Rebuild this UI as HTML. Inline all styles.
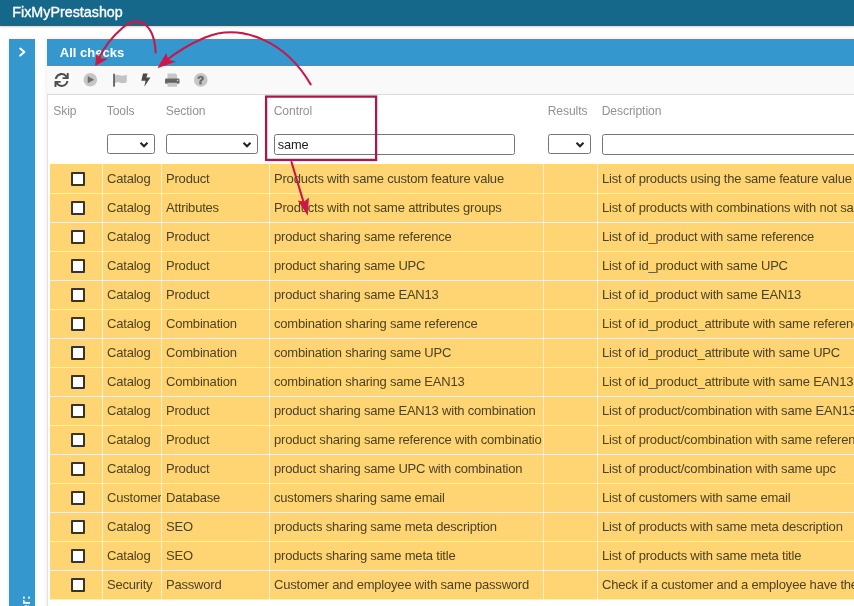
<!DOCTYPE html>
<html lang="en">
<head>
<meta charset="utf-8">
<title>FixMyPrestashop</title>
<style>
*{box-sizing:border-box;margin:0;padding:0}
#topbar,#side,#panel{will-change:transform}
html,body{width:854px;height:606px;overflow:hidden;background:#fff;font-family:"Liberation Sans",Arial,sans-serif;}
body{position:relative}
#topbar{position:absolute;left:0;top:0;width:854px;height:25.5px;background:#16688a;color:#fff;font-size:14.3px;line-height:24px;padding-left:12.3px;-webkit-text-stroke:.35px #fff;box-shadow:0 1px 2px rgba(0,0,0,.18)}
#side{position:absolute;left:9px;top:39px;width:26px;height:580px;background:#3498cf;box-shadow:0 0 3px rgba(0,0,0,.12)}
#side svg{position:absolute;left:0;top:0}
#panel{position:absolute;left:47px;top:39px;width:830px;height:580px;background:#fff;box-shadow:0 0 4px rgba(0,0,0,.10)}
#pl{position:absolute;left:0;top:26px;width:1px;height:560px;background:#e3e3e3}
#phead{position:absolute;left:0;top:0;width:100%;height:26.6px;background:#3498cf;color:#fff;font-size:13px;font-weight:bold;line-height:27px;padding-left:12.8px}
#tbar{position:absolute;left:0;top:26.6px;width:100%;height:29.4px;background:#f9f9f9;border-bottom:1px solid #dcdcdc}
#tbar svg{position:absolute}
#q{position:absolute;left:146.800px;top:7.100px;width:14px;height:14px;text-align:center;font-weight:bold;font-size:11.500px;line-height:14px;color:#6a6a6a;-webkit-text-stroke:.6px #6a6a6a}
#thead{position:absolute;left:0;top:56px;width:100%;height:69px}
#thead .l{position:absolute;top:9.400px;margin-left:.4px;font-size:12.100px;letter-spacing:-.08px;color:#929292;line-height:14px;white-space:nowrap}
.fi{position:absolute;top:39.400px;height:20px;border:1px solid #767676;border-radius:2.500px;background:#fff;font-size:12.800px;letter-spacing:-.1px;color:#222;line-height:20px;padding-left:2.700px}
.fi.t{height:21px}
.fi svg{position:absolute;right:5px;top:5.500px}
table{position:absolute;left:3px;top:125px;border-collapse:separate;border-spacing:0;table-layout:fixed;width:820px}
td{height:29px;background:#ffd573;border-bottom:1px solid #fff0cc;border-right:1px solid #fff0cc;font-size:13px;letter-spacing:-.2px;color:#4d4222;padding:0 0 0 4px;white-space:nowrap;overflow:hidden;vertical-align:top;line-height:26px;padding-top:.5px}
td.c{padding:0}
tr:first-child td{height:30px;padding-top:1.500px}
tr:first-child td.c{padding-top:1px}
td.c{line-height:0}
.cb{display:block;width:14px;height:14px;border:2px solid #3a3327;background:#fff;margin:7px 0 0 21px;border-radius:1px}
#anno{position:absolute;left:0;top:0;width:854px;height:606px;pointer-events:none}
</style>
</head>
<body>
<div id="topbar">FixMyPrestashop</div>

<div id="side">
  <svg width="26" height="567" viewBox="0 0 26 567"><path d="M11.200 9.600 L15.400 13.100 L11.200 16.600" fill="none" stroke="#fff" stroke-width="2" stroke-linecap="round" stroke-linejoin="round"/><text transform="translate(20.800 556.300) rotate(-90)" text-anchor="end" fill="#fff" style="font-family:'Liberation Sans',Arial,sans-serif;font-weight:bold;font-size:13px">Filter:</text></svg>
</div>

<div id="panel">
  <div id="pl"></div>
  <div id="phead">All checks</div>
  <div id="tbar">
    <svg style="left:0;top:0" width="200" height="29" viewBox="47 65.600 200 29">
      <!-- refresh -->
      <g transform="translate(54.500 72.500) scale(0.02773)"><path fill="#4e4e4e" d="M440.650 12.570l4 82.770A247.160 247.160 0 0 0 255.830 8C134.730 8 33.910 94.920 12.290 209.820A12 12 0 0 0 24.090 224h49.050a12 12 0 0 0 11.670-9.260 175.910 175.910 0 0 1 317-56.940l-101.460-4.860a12 12 0 0 0-12.570 12v47.410a12 12 0 0 0 12 12H500a12 12 0 0 0 12-12V12a12 12 0 0 0-12-12h-47.370a12 12 0 0 0-11.980 12.570zM255.830 432a175.610 175.610 0 0 1-146-77.800l101.800 4.870a12 12 0 0 0 12.570-12v-47.400a12 12 0 0 0-12-12H12a12 12 0 0 0-12 12V500a12 12 0 0 0 12 12h47.350a12 12 0 0 0 12-12.600l-4.150-82.570A247.170 247.170 0 0 0 255.830 504c121.110 0 221.930-86.920 243.550-201.820a12 12 0 0 0-11.800-14.180h-49.050a12 12 0 0 0-11.670 9.260A175.860 175.860 0 0 1 255.830 432z"/></g>
      <!-- play circle -->
      <circle cx="90.300" cy="79.300" r="6.800" fill="#c6c6c6"/>
      <path d="M88 76.200 L93.700 79.300 L88 82.400 Z" fill="#6e6e6e" stroke="#6e6e6e" stroke-width=".6" stroke-linejoin="round"/>
      <!-- flag -->
      <path d="M114.800 75 C116.800 74 118.400 74.300 120 74.900 C121.800 75.500 123.600 75.500 126.800 74.400 V81.800 C124 83 122 83 120.200 82.400 C118.500 81.800 116.900 81.700 114.800 82.700 Z" fill="#c4c4c4"/>
      <rect x="113.100" y="73.100" width="1.900" height="13.300" rx=".9" fill="#666"/>
      <!-- bolt -->
      <path d="M143 73.100 H147.700 L146.300 77.200 H150.500 L144.300 86.400 L145.500 80.400 H141.300 Z" fill="#4a4a4a"/>
      <!-- print -->
      <path d="M167.500 73.200 H175.600 L177.100 74.700 V78.500 H167.500 Z" fill="#c6c6c6"/>
      <rect x="165" y="78" width="14.500" height="5.300" rx="1.300" fill="#666"/>
      <rect x="167.500" y="81.800" width="9.600" height="4.500" fill="#c6c6c6"/>
      <rect x="167.500" y="81.300" width="9.600" height=".9" fill="#555"/>
      <circle cx="177.600" cy="80" r=".7" fill="#ddd"/>
      <!-- question -->
      <circle cx="200.800" cy="79.500" r="6.800" fill="#c6c6c6"/>
    </svg>
    <div id="q">?</div>
  </div>

  <div id="thead">
    <div class="l" style="left:5.8px">Skip</div>
    <div class="l" style="left:59.3px">Tools</div>
    <div class="l" style="left:118.3px">Section</div>
    <div class="l" style="left:226.3px">Control</div>
    <div class="l" style="left:500.3px">Results</div>
    <div class="l" style="left:554.3px">Description</div>

    <div class="fi" style="left:60px;width:48px"><svg width="10" height="8" viewBox="0 0 10 8"><path d="M1.500 1.800 L5 5.300 L8.500 1.800" fill="none" stroke="#222" stroke-width="2"/></svg></div>
    <div class="fi" style="left:119px;width:92px"><svg width="10" height="8" viewBox="0 0 10 8"><path d="M1.500 1.800 L5 5.300 L8.500 1.800" fill="none" stroke="#222" stroke-width="2"/></svg></div>
    <div class="fi t" style="left:227px;width:241px">same</div>
    <div class="fi" style="left:501px;width:43px"><svg width="10" height="8" viewBox="0 0 10 8"><path d="M1.500 1.800 L5 5.300 L8.500 1.800" fill="none" stroke="#222" stroke-width="2"/></svg></div>
    <div class="fi t" style="left:555px;width:280px"></div>
  </div>

  <table>
    <colgroup><col style="width:53px"><col style="width:59px"><col style="width:108px"><col style="width:274px"><col style="width:54px"><col style="width:272px"></colgroup>
    <tr><td class="c"><span class="cb"></span></td><td>Catalog</td><td>Product</td><td>Products with same custom feature value</td><td></td><td>List of products using the same feature value</td></tr>
    <tr><td class="c"><span class="cb"></span></td><td>Catalog</td><td>Attributes</td><td>Products with not same attributes groups</td><td></td><td>List of products with combinations with not same attributes groups</td></tr>
    <tr><td class="c"><span class="cb"></span></td><td>Catalog</td><td>Product</td><td>product sharing same reference</td><td></td><td>List of id_product with same reference</td></tr>
    <tr><td class="c"><span class="cb"></span></td><td>Catalog</td><td>Product</td><td>product sharing same UPC</td><td></td><td>List of id_product with same UPC</td></tr>
    <tr><td class="c"><span class="cb"></span></td><td>Catalog</td><td>Product</td><td>product sharing same EAN13</td><td></td><td>List of id_product with same EAN13</td></tr>
    <tr><td class="c"><span class="cb"></span></td><td>Catalog</td><td>Combination</td><td>combination sharing same reference</td><td></td><td>List of id_product_attribute with same reference</td></tr>
    <tr><td class="c"><span class="cb"></span></td><td>Catalog</td><td>Combination</td><td>combination sharing same UPC</td><td></td><td>List of id_product_attribute with same UPC</td></tr>
    <tr><td class="c"><span class="cb"></span></td><td>Catalog</td><td>Combination</td><td>combination sharing same EAN13</td><td></td><td>List of id_product_attribute with same EAN13</td></tr>
    <tr><td class="c"><span class="cb"></span></td><td>Catalog</td><td>Product</td><td>product sharing same EAN13 with combination</td><td></td><td>List of product/combination with same EAN13</td></tr>
    <tr><td class="c"><span class="cb"></span></td><td>Catalog</td><td>Product</td><td><div style="overflow:hidden;margin-right:1.500px">product sharing same reference with combination</div></td><td></td><td>List of product/combination with same reference</td></tr>
    <tr><td class="c"><span class="cb"></span></td><td>Catalog</td><td>Product</td><td>product sharing same UPC with combination</td><td></td><td>List of product/combination with same upc</td></tr>
    <tr><td class="c"><span class="cb"></span></td><td>Customer</td><td>Database</td><td>customers sharing same email</td><td></td><td>List of customers with same email</td></tr>
    <tr><td class="c"><span class="cb"></span></td><td>Catalog</td><td>SEO</td><td>products sharing same meta description</td><td></td><td>List of products with same meta description</td></tr>
    <tr><td class="c"><span class="cb"></span></td><td>Catalog</td><td>SEO</td><td>products sharing same meta title</td><td></td><td>List of products with same meta title</td></tr>
    <tr><td class="c"><span class="cb"></span></td><td>Security</td><td>Password</td><td>Customer and employee with same password</td><td></td><td>Check if a customer and a employee have the same password</td></tr>
  </table>
</div>

<svg id="anno" viewBox="0 0 854 606">
  <rect x="266.100" y="96.600" width="110" height="63.300" fill="none" stroke="#ab174a" stroke-width="2.300"/>
  <g fill="none" stroke="#c8174b" stroke-width="2.100" stroke-linecap="round">
    <path d="M155.600 52.500 C154.500 26 140 13.500 123.500 27 C111 37.500 102.500 50 98.500 59.500"/>
    <path d="M310.600 84.300 C285 40 240 23 205 37.500 C190 44 174 54 165 61.500"/>
    <path d="M291.500 162 L305 207"/>
  </g>
  <g fill="#cc1748">
    <path d="M95.200 66 L96.300 53.700 L100.700 58.300 L108 58.800 Z"/>
    <path d="M157.400 68.200 L166.200 53 L168.300 59.700 L176 61.400 Z"/>
    <path d="M307.800 215.800 L297.800 200.600 L304.200 201.600 L308.900 197.600 Z"/>
  </g>
</svg>
</body>
</html>
